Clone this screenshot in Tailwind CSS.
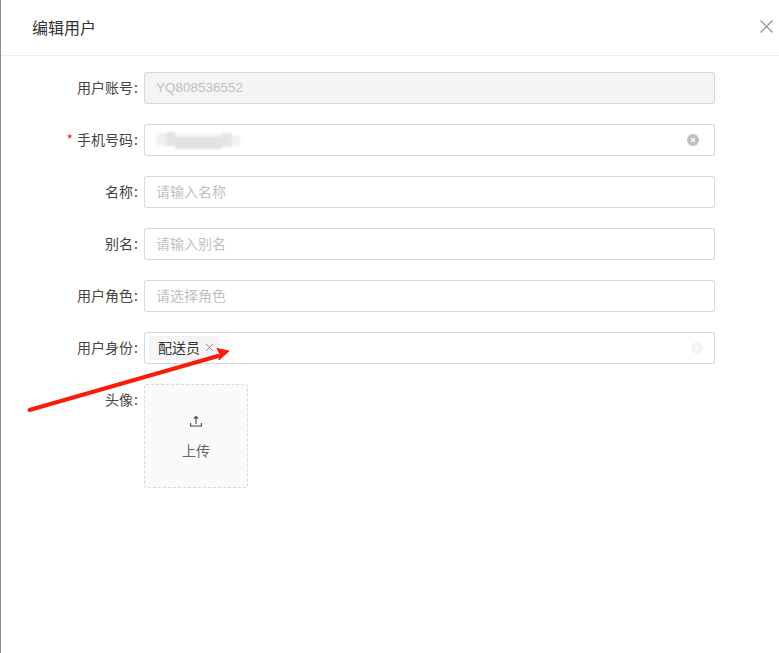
<!DOCTYPE html>
<html lang="zh-CN">
<head>
    <meta charset="UTF-8">
    <title>编辑用户</title>
    <script src="https://cdn.jsdelivr.net/npm/@tailwindcss/browser@4"></script>
</head>
<body class="bg-white">
    <div class="relative w-[779px] h-[653px] overflow-hidden bg-white border-l border-[#8c8c8c] font-['Noto_Sans_CJK_SC','Noto_Sans',sans-serif] text-[14px] text-[#333]">
        <!-- header -->
        <div class="h-[56px] border-b border-[#ececec] flex items-center justify-between pl-[31px] pr-[5px]">
            <h2 class="text-[16px] text-[#333] pb-[2px]">编辑用户</h2>
            <svg class="w-[15px] h-[15px] mb-[3px]" viewBox="0 0 15 15" fill="none" stroke="#8a8a8a" stroke-width="1.2"><path d="M1.5 1.5l12 12M13.5 1.5l-12 12"/></svg>
        </div>

        <!-- form -->
        <div class="flex flex-col gap-[20px] pt-[16px]">
            <div class="flex">
                <div class="w-[137px] h-[32px] flex items-center justify-end text-[#444] pb-[2px]">用户账号<span class="ml-[1px]">:</span></div>
                <div class="ml-[6px] w-[571px] h-[32px] rounded-[2px] border border-[#d9d9d9] bg-[#f4f4f4] flex items-center px-[11px] font-['Liberation_Sans'] text-[13.5px] text-[#c0c0c0]">YQ808536552</div>
            </div>

            <div class="flex">
                <div class="w-[137px] h-[32px] flex items-center justify-end text-[#444] pb-[2px]"><span class="text-[#f5222d] mr-[4px]">*</span>手机号码<span class="ml-[1px]">:</span></div>
                <div class="ml-[6px] w-[571px] h-[32px] rounded-[2px] border border-[#d9d9d9] flex items-center justify-between pl-[11px] pr-[15px]">
                    <!-- blurred phone number -->
                    <div class="flex h-[24px] items-start blur-[1px]">
                        <div class="w-[10px] h-[13px] mt-[5px] rounded-l-[5px] bg-[#eef0f0]"></div>
                        <div class="w-[9px] h-[14px] mt-[4px] bg-[#e6e3e3]"></div>
                        <div class="w-[47px] h-[16px] mt-[5px] border-t-[4px] border-[#f4f4f4] bg-[#e2e2e4]"></div>
                        <div class="w-[10px] h-[14px] mt-[5px] bg-[#e6e6ea]"></div>
                        <div class="w-[8px] h-[11px] mt-[7px] bg-[#f1f2f2]"></div>
                    </div>
                    <svg class="w-[12px] h-[12px]" viewBox="0 0 12 12"><circle cx="6" cy="6" r="6" fill="#bfbfbf"/><path d="M4 4l4 4M8 4l-4 4" stroke="#fff" stroke-width="1.1"/></svg>
                </div>
            </div>

            <div class="flex">
                <div class="w-[137px] h-[32px] flex items-center justify-end text-[#444] pb-[2px]">名称<span class="ml-[1px]">:</span></div>
                <div class="ml-[6px] w-[571px] h-[32px] rounded-[2px] border border-[#d9d9d9] flex items-center px-[11px] text-[#bfbfbf] pb-[2px]">请输入名称</div>
            </div>

            <div class="flex">
                <div class="w-[137px] h-[32px] flex items-center justify-end text-[#444] pb-[2px]">别名<span class="ml-[1px]">:</span></div>
                <div class="ml-[6px] w-[571px] h-[32px] rounded-[2px] border border-[#d9d9d9] flex items-center px-[11px] text-[#bfbfbf] pb-[2px]">请输入别名</div>
            </div>

            <div class="flex">
                <div class="w-[137px] h-[32px] flex items-center justify-end text-[#444] pb-[2px]">用户角色<span class="ml-[1px]">:</span></div>
                <div class="ml-[6px] w-[571px] h-[32px] rounded-[2px] border border-[#d9d9d9] flex items-center px-[11px] text-[#bfbfbf] pb-[2px]">请选择角色</div>
            </div>

            <div class="flex">
                <div class="w-[137px] h-[32px] flex items-center justify-end text-[#444] pb-[2px]">用户身份<span class="ml-[1px]">:</span></div>
                <div class="ml-[6px] w-[571px] h-[32px] rounded-[2px] border border-[#d9d9d9] flex items-center justify-between pl-[4px] pr-[11px]">
                    <div class="h-[24px] w-[70px] rounded-[2px] border border-[#f0f0f0] bg-[#f5f5f5] flex items-center pl-[8px] pb-[1px] text-[#333]">
                        配送员
                        <svg class="w-[9px] h-[9px] ml-[5px]" viewBox="0 0 9 9" fill="none" stroke="#8c8c8c" stroke-width="1"><path d="M1 1l7 7M8 1l-7 7"/></svg>
                    </div>
                    <svg class="w-[12px] h-[12px]" viewBox="0 0 12 12"><circle cx="6" cy="6" r="6" fill="#f5f5f5"/><path d="M4.5 7.5l3-3" stroke="#fff" stroke-width="1.1"/></svg>
                </div>
            </div>

            <div class="flex">
                <div class="w-[137px] h-[32px] flex items-center justify-end text-[#444] pb-[2px]">头像<span class="ml-[1px]">:</span></div>
                <div class="ml-[6px] w-[104px] h-[104px] rounded-[2px] border border-dashed border-[#d9d9d9] bg-[#fafafa] flex flex-col items-center pt-[30px] text-[#666]">
                    <svg class="w-[12px] h-[12px]" viewBox="0 0 12 12" fill="none" stroke="#444" stroke-width="1.1"><path d="M6 9V1.5M3.800 3.700L6 1.500l2.200 2.200M.6 8v3h10.800V8"/></svg>
                    <span class="mt-[12px] text-[14px] leading-[22px]">上传</span>
                </div>
            </div>
        </div>

        <!-- annotation arrow -->
        <svg class="absolute left-[-1px] top-0 pointer-events-none" width="779" height="653" fill="none">
            <path d="M29.500 410L218 356" stroke="#fb1a0c" stroke-width="4" stroke-linecap="round"/>
            <path d="M229 351L217 348.500L220 354L219 360Z" fill="#fb1a0c" stroke="#fb1a0c" stroke-linejoin="round"/>
        </svg>
    </div>
</body>
</html>
